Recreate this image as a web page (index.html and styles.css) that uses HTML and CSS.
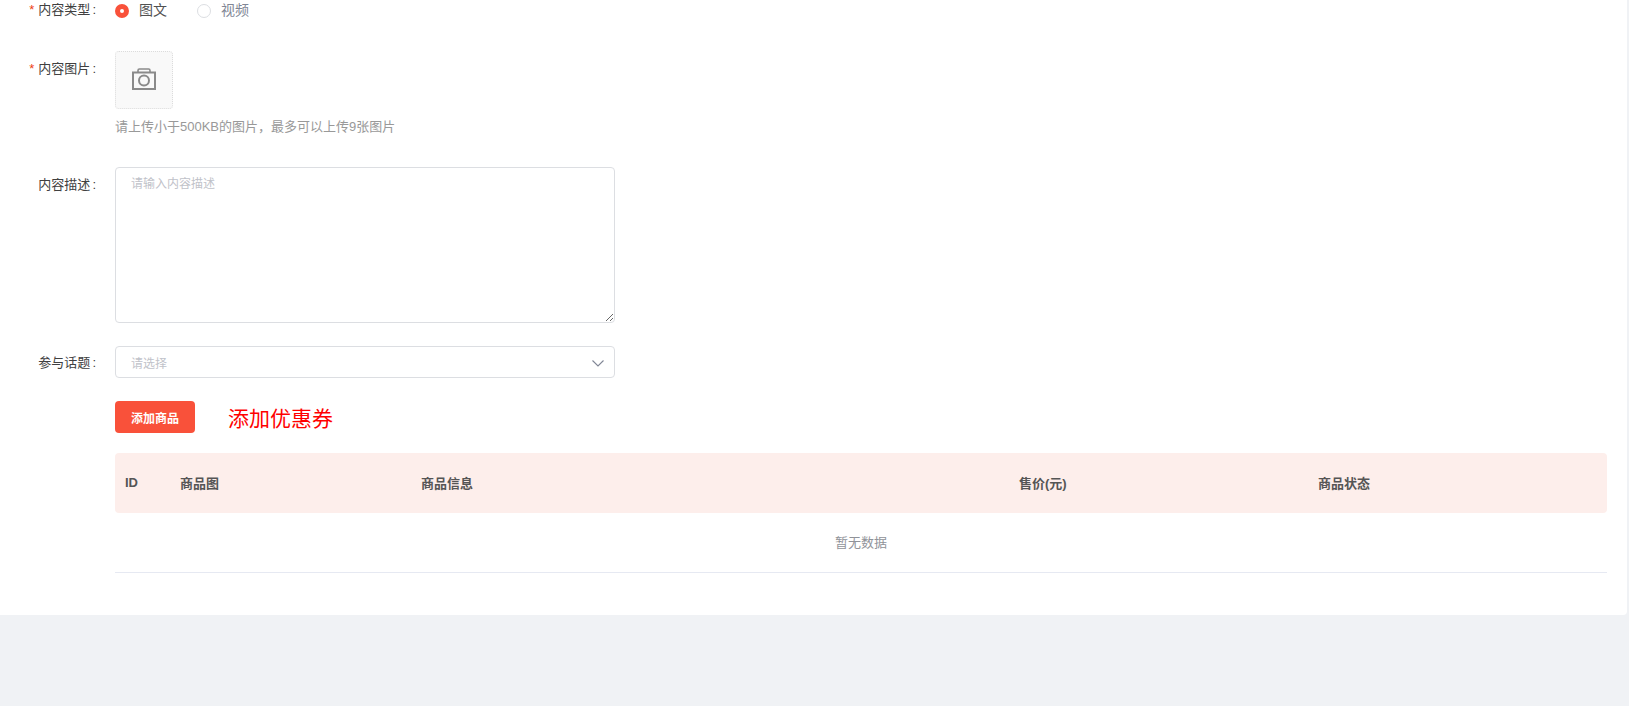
FILE: index.html
```html
<!DOCTYPE html>
<html lang="zh-CN">
<head>
<meta charset="utf-8">
<title>内容发布</title>
<link rel="stylesheet" href="styles.css">
</head>
<body>
<main class="card">
  <form class="form">
    <div class="row row-type">
      <label class="label label-short"><span class="req">*</span>内容类型<span class="colon">:</span></label>
      <div class="radios">
        <span class="radio radio-on"><i class="dot dot-on"></i>图文</span>
        <span class="radio"><i class="dot"></i>视频</span>
      </div>
    </div>
    <div class="row row-pic">
      <label class="label label-tall"><span class="req">*</span>内容图片<span class="colon">:</span></label>
      <div class="pic-field">
        <div class="upload">
          <svg class="camera" width="24" height="22" viewBox="0 0 24 22" fill="none" stroke="#8a8a8a" stroke-width="2">
            <rect x="1" y="4.500" width="22" height="16.500"/>
            <path d="M6 4V2.400Q6 1 7.400 1H16.600Q18 1 18 2.400V4" stroke-width="1.600"/>
            <circle cx="12" cy="12.500" r="5"/>
          </svg>
        </div>
        <p class="hint">请上传小于500KB的图片，最多可以上传9张图片</p>
      </div>
    </div>
    <div class="row row-desc">
      <label class="label label-tall">内容描述<span class="colon">:</span></label>
      <textarea class="textarea" placeholder="请输入内容描述"></textarea>
    </div>
    <div class="row row-topic">
      <label class="label">参与话题<span class="colon">:</span></label>
      <div class="select">
        <span>请选择</span>
        <svg width="12" height="7" viewBox="0 0 12 7" fill="none" stroke="#808695" stroke-width="1.100"><path d="M.5.5 6 6 11.500.5"/></svg>
      </div>
    </div>
    <div class="actions">
      <button type="button" class="btn">添加商品</button>
      <a class="coupon">添加优惠券</a>
    </div>
    <table class="table">
      <colgroup>
        <col class="c1"><col class="c2"><col class="c3"><col class="c4"><col class="c5">
      </colgroup>
      <thead>
        <tr><th>ID</th><th>商品图</th><th>商品信息</th><th>售价(元)</th><th>商品状态</th></tr>
      </thead>
      <tbody>
        <tr><td colspan="5">暂无数据</td></tr>
      </tbody>
    </table>
  </form>
</main>
</body>
</html>
```
FILE: styles.css
```css
* { box-sizing: border-box; }
html, body { margin: 0; height: 100%; overflow: hidden; }
body {
  background: #f0f2f5;
  font-family: "Liberation Sans", "Noto Sans CJK SC", sans-serif;
  font-size: 13px;
  color: #515a6e;
  padding-right: 2px;
}
.card {
  background: #fff;
  height: 615px;
  border-radius: 0 0 4px 0;
  padding-right: 20px;
}
.form { padding-left: 115px; }
.row { display: flex; position: relative; }
.label {
  position: absolute;
  right: 100%;
  width: 115px;
  padding-right: 19px;
  text-align: right;
  line-height: 34px;
  color: #404040;
  white-space: nowrap;
}
.label-short { line-height: 20px; }
.label-tall { line-height: 36px; }
.colon { margin-left: 2px; }
.req { color: #ed4014; margin-right: 4px; }
.row-type { height: 22px; margin-bottom: 29px; }
.radios { display: flex; gap: 30px; align-items: center; }
.radio {
  display: flex; align-items: center; gap: 10px;
  color: #808695; font-size: 14px; line-height: 20px;
  padding-bottom: 2px;
}
.radio-on { color: #515151; }
.dot {
  width: 14px; height: 14px; border-radius: 50%; margin-top: 2px;
  border: 1px solid #dcdee2; background: #fff; display: block;
}
.dot-on { border: 5px solid #f9513a; background: #fff; }
.row-pic { margin-bottom: 31px; }
.upload {
  width: 58px; height: 58px;
  border: 1px dotted #dcdcdc; border-radius: 4px; background: #f9f9f9;
  display: flex; align-items: center; justify-content: center;
}
.camera { margin-bottom: 2px; }
.hint { margin: 9px 0 0; line-height: 18px; color: #999; }
.pic-field { height: 85px; }
.row-desc { margin-bottom: 23px; }
.textarea {
  display: block; width: 500px; height: 156px;
  border: 1px solid #dcdee2; border-radius: 4px;
  padding: 7px 15px; font: inherit; font-size: 12px; line-height: 18px; color: #515a6e;
  outline: 0;
}
.textarea::placeholder { color: #bfc2c9; }
.row-topic { margin-bottom: 23px; }
.select {
  width: 500px; height: 32px;
  border: 1px solid #dcdee2; border-radius: 4px;
  padding: 0 10px 0 15px;
  display: flex; align-items: center; justify-content: space-between;
  font-size: 12px; color: #bfc2c9;
}
.select svg { margin-top: 3px; }
.actions { display: flex; align-items: center; margin-bottom: 20px; height: 32px; }
.btn {
  width: 80px; height: 32px; border: 0; border-radius: 4px;
  background: #f9513a; color: #fff;
  font: inherit; font-size: 12px; font-weight: 700; padding: 0;
}
.coupon { margin-left: 33px; font-size: 21px; line-height: 32px; color: #f00; margin-top: 4px; }
.table { width: 1492px; border-collapse: separate; border-spacing: 0; table-layout: fixed; }
.c1 { width: 55px; } .c2 { width: 241px; } .c3 { width: 598px; } .c4 { width: 299px; } .c5 { width: 299px; }
.table th {
  height: 60px; background: #fdeeeb; text-align: left; padding: 0 10px 2px;
  font-size: 13px; font-weight: 700; color: #555;
}
.table th:first-child { border-radius: 4px 0 0 4px; }
.table th:last-child { border-radius: 0 4px 4px 0; }
.table td {
  height: 60px; padding: 0 0 2px; text-align: center; color: #909399; font-size: 13px;
  border-bottom: 1px solid #e6e9f2;
}
```
